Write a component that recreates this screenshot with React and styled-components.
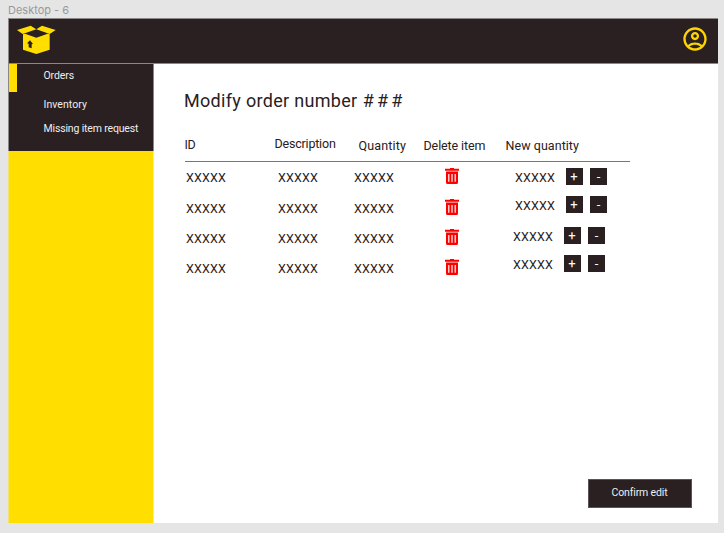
import React from "react";
import styled, { createGlobalStyle } from "styled-components";
import { MdOutlineAccountCircle } from "react-icons/md";

const ink = "#2a2022";
const yellow = "#ffde00";

const GlobalStyle = createGlobalStyle`
  * { box-sizing: border-box; }
  body { margin: 0; background: #e5e5e5; font-family: Roboto, sans-serif; color: ${ink}; }
`;
const Canvas = styled.div`
  width: 724px;
  height: 533px;
  padding-left: 8px;
  overflow: hidden;
`;
const FrameName = styled.div`
  height: 18px;
  font: 11px/20px Inter, sans-serif;
  color: #999;
`;
const Frame = styled.div`
  width: 710px;
  height: 505px;
  background: #fff;
`;
const Header = styled.header`
  display: flex;
  align-items: center;
  justify-content: space-between;
  height: 46px;
  padding: 0 9.5px 3px 8px;
  background: ${ink};
  border: solid #8b8687;
  border-width: 1px 0 1px 1px;
`;
const Account = styled(MdOutlineAccountCircle)`
  width: 28px;
  height: 28px;
  margin-top: -1px;
  color: #ffd500;
`;
const Body = styled.div`
  display: flex;
  height: 459px;
`;
const Sidebar = styled.aside`
  width: 146px;
  background: ${yellow};
  border-left: 1px solid #f2e273;
  border-right: 1px solid #ffef80;
`;
const Nav = styled.nav`
  display: flex;
  flex-direction: column;
  height: 87px;
  margin: 0 -1px;
  background: ${ink};
  border: solid #8b8687;
  border-width: 0 1px;
`;
const NavItem = styled.a`
  height: ${(p) => p.$height}px;
  padding-left: ${(p) => (p.$active ? 26.5 : 34.5)}px;
  border-left: ${(p) => (p.$active ? `8px solid ${yellow}` : "0")};
  font-size: 10.5px;
  line-height: ${(p) => p.$line}px;
  letter-spacing: ${(p) => p.$track}px;
  color: #eee;
  white-space: nowrap;
`;
const Main = styled.main`
  display: flex;
  flex-direction: column;
  flex: 1;
  padding: 24px 26px 15px 30px;
`;
const Title = styled.h1`
  height: 26px;
  margin: 0 0 22px;
  font-size: 18px;
  font-weight: 400;
  line-height: 26px;
  letter-spacing: 0.31px;
  white-space: nowrap;
`;
const Hashes = styled.span`
  margin-left: 0.5px;
  letter-spacing: 3.2px;
`;
const HeadRow = styled.div`
  display: grid;
  grid-template-columns: 90px 84px 65px 82px 123px;
  height: 26px;
  width: 445px;
  margin-left: 0.5px;
  border-bottom: 1px solid #777;
`;
const HeadCell = styled.span`
  padding-top: ${(p) => p.$top}px;
  font-size: 12.5px;
  line-height: 16px;
  letter-spacing: ${(p) => p.$track}px;
  white-space: nowrap;
`;
const Columns = styled.div`
  display: flex;
  height: 120px;
`;
const Column = styled.div`
  width: ${(p) => p.$width}px;
  padding: ${(p) => p.$top}px 0 0 ${(p) => p.$left}px;
`;
const Value = styled.div`
  height: ${(p) => p.$height || 16}px;
  width: 41px;
  font-size: 12.5px;
  line-height: ${(p) => p.$line || 16}px;
  letter-spacing: 0.16px;
`;
const TrashCell = styled.div`
  height: ${(p) => p.$height}px;
  svg { display: block; }
`;
const Stepper = styled.div`
  display: flex;
  height: 17px;
  margin: 0 0 ${(p) => p.$after}px ${(p) => p.$shift}px;
`;
const StepButton = styled.button`
  width: 17px;
  height: 17px;
  margin-left: ${(p) => p.$gap}px;
  padding: 0 ${(p) => p.$inset}px 0 0;
  border: 0;
  background: ${ink};
  color: #fff;
  font: 13px/17px Roboto, sans-serif;
`;
const Confirm = styled.button`
  width: 104px;
  height: 29px;
  margin: auto 0 0 auto;
  padding: 0 1px 2px 0;
  border: 1px solid #5b5355;
  background: ${ink};
  color: #eee;
  font: 10.5px/24px Roboto, sans-serif;
  letter-spacing: -0.15px;
`;

function BoxLogo() {
  return (
    <svg width="40" height="30" viewBox="0 0 120 90" fill={yellow}>
      <path d="M0 15 L41 2 L58 13 L17 27Z M58 13 L75 2 L116 15 L98 27Z" />
      <path d="M18 28 L24 26 L58 38 L92 26 L98 28 V74 L58 87 L18 74Z" />
      <path fill={ink} d="M39 46 L48 57 L44 58 V70 L35 67 V56 L30 55Z" />
    </svg>
  );
}

function Trash() {
  return (
    <svg width="14" height="16" viewBox="0 0 14 16" fill="#f00">
      <path d="M5 0h4v0.800h5v2H0V0.800h5z" />
      <path fillRule="evenodd" d="M1 3.600h12v10.900q0 1.500-1.500 1.500h-9Q1 16 1 14.500zM3.200 6v7.800h1.200V6zM6.400 6v7.800h1.200V6zM9.600 6v7.800h1.200V6z" />
    </svg>
  );
}

const rows = [0, 1, 2, 3];
const valueHeights = [31, 30, 30, 16];
const trashHeights = [31, 30, 30, 16];
const steppers = [
  { shift: 0, after: 11 },
  { shift: 0, after: 14 },
  { shift: -2, after: 10.5 },
  { shift: -2, after: 0 },
];

function Values({ width, left }) {
  return (
    <Column $width={width} $left={left} $top={8}>
      {rows.map((i) => <Value key={i} $height={valueHeights[i]}>XXXXX</Value>)}
    </Column>
  );
}

export default function App() {
  return (
    <Canvas>
      <GlobalStyle />
      <FrameName>Desktop - 6</FrameName>
      <Frame>
        <Header><BoxLogo /><Account /></Header>
        <Body>
          <Sidebar>
            <Nav>
              <NavItem $active $height={28} $line={24} $track={-0.1}>Orders</NavItem>
              <NavItem $height={24} $line={26} $track={0.05}>Inventory</NavItem>
              <NavItem $height={24} $line={26} $track={-0.16}>Missing item request</NavItem>
            </Nav>
          </Sidebar>
          <Main>
            <Title>Modify order number <Hashes>###</Hashes></Title>
            <HeadRow>
              <HeadCell $top={1} $track={-0.3}>ID</HeadCell>
              <HeadCell $top={0} $track={-0.2}>Description</HeadCell>
              <HeadCell $top={2} $track={0.15}>Quantity</HeadCell>
              <HeadCell $top={2} $track={-0.1}>Delete item</HeadCell>
              <HeadCell $top={2} $track={0.05}>New quantity</HeadCell>
            </HeadRow>
            <Columns>
              <Values width={92} left={2} />
              <Values width={76} left={2} />
              <Values width={91} left={2} />
              <Column $width={70} $left={2} $top={6}>
                {trashHeights.map((h, i) => <TrashCell key={i} $height={h}><Trash /></TrashCell>)}
              </Column>
              <Column $width={96} $left={2} $top={6}>
                {steppers.map((s, i) => (
                  <Stepper key={i} $shift={s.shift} $after={s.after}>
                    <Value $line={20}>XXXXX</Value>
                    <StepButton $gap={10.4} $inset={2}>+</StepButton>
                    <StepButton $gap={6.6} $inset={0}>-</StepButton>
                  </Stepper>
                ))}
              </Column>
            </Columns>
            <Confirm>Confirm edit</Confirm>
          </Main>
        </Body>
      </Frame>
    </Canvas>
  );
}
